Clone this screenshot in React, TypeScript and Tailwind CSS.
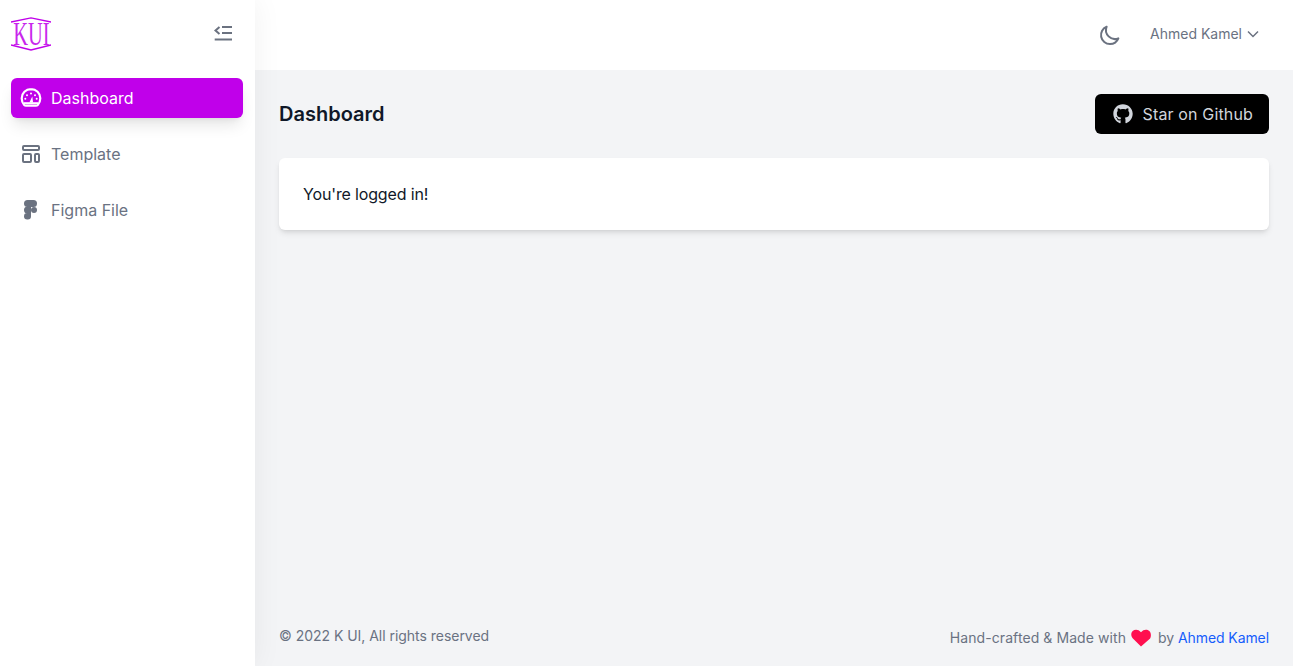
import { FaGithub } from 'react-icons/fa';

function Logo() {
  return (
    <div className="relative w-[40px] h-[34px] ml-[11px] mb-[2px] flex items-center justify-center text-[#c000ea]">
      <svg className="absolute inset-0" width="40" height="34" viewBox="0 0 40 34" fill="none" stroke="currentColor" strokeWidth="1.3" aria-hidden="true">
        <path d="M0 5 L20 0.8 L40 5" />
        <path d="M0 28 L20 33 L40 28" />
      </svg>
      <span className="font-['Liberation_Serif',serif] text-[33px] leading-none whitespace-nowrap scale-x-[0.62] shrink-0 opacity-85">KUI</span>
    </div>
  );
}

function FoldIcon() {
  return (
    <svg className="mb-1" width="24" height="24" viewBox="0 0 24 24" fill="none" stroke="#6b7280" strokeWidth="2" aria-hidden="true">
      <path d="M11 6h10M11 12h10M3.700 18.500H21" />
      <path d="M8.500 6 4.500 9.500 8.500 13" strokeWidth="2" />
    </svg>
  );
}

function GaugeIcon() {
  return (
    <svg width="24" height="24" viewBox="0 0 24 24" fill="none" aria-hidden="true">
      <path d="M12 3.200c-5.200 0-9.300 4-9.300 9.100 0 2.600.9 5 2.500 6.700.5.500 1.100.700 1.800.700h10c.7 0 1.300-.2 1.800-.7 1.600-1.700 2.500-4.100 2.500-6.700 0-5.100-4.100-9.100-9.300-9.100z" stroke="#fff" strokeWidth="2.200" />
      <circle cx="12" cy="7.400" r="1" fill="#fff" />
      <circle cx="8" cy="9.200" r="1" fill="#fff" />
      <circle cx="16" cy="9.200" r="1" fill="#fff" />
      <circle cx="6.300" cy="12.800" r="1" fill="#fff" />
      <circle cx="17.700" cy="12.800" r="1" fill="#fff" />
      <path d="M10.400 16.500 13.300 10.500l.8 6z" fill="#fff" />
      <path d="M5 17.200h14" stroke="#fff" strokeWidth="2" />
    </svg>
  );
}

function TemplateIcon() {
  return (
    <svg width="24" height="24" viewBox="0 0 24 24" fill="none" stroke="#6b7280" strokeWidth="2" strokeLinecap="round" strokeLinejoin="round" aria-hidden="true">
      <path d="M4 5a1 1 0 011-1h14a1 1 0 011 1v2a1 1 0 01-1 1H5a1 1 0 01-1-1V5zM4 13a1 1 0 011-1h6a1 1 0 011 1v6a1 1 0 01-1 1H5a1 1 0 01-1-1v-6zM16 13a1 1 0 011-1h2a1 1 0 011 1v6a1 1 0 01-1 1h-2a1 1 0 01-1-1v-6z" />
    </svg>
  );
}

function FigmaIcon() {
  return (
    <svg width="24" height="24" viewBox="0 0 24 24" fill="#6b7280" aria-hidden="true">
      <rect x="5" y="2" width="13" height="7" rx="3.500" />
      <rect x="5" y="8.500" width="7" height="7" rx="3.500" />
      <path d="M8.500 8.500H12v7H8.500z" />
      <circle cx="15" cy="12" r="3" />
      <rect x="5" y="15" width="7" height="6.500" rx="3.250" />
      <path d="M8.500 15H12v3H8.500z" />
    </svg>
  );
}

function MoonIcon() {
  return (
    <svg width="24" height="24" viewBox="0 0 24 24" fill="none" stroke="#6b7280" strokeWidth="2" strokeLinecap="round" strokeLinejoin="round" aria-hidden="true">
      <path d="M20.354 15.354A9 9 0 018.646 3.646 9.003 9.003 0 0012 21a9.003 9.003 0 008.354-5.646z" />
    </svg>
  );
}

function Chevron() {
  return (
    <svg width="20" height="20" viewBox="0 0 20 20" fill="none" stroke="#6b7280" strokeWidth="1.500" aria-hidden="true">
      <path d="M5 7.500 10 12.500l5-5" />
    </svg>
  );
}

function Heart() {
  return (
    <svg className="ml-[5px] mr-[7px]" width="20" height="20" viewBox="0 0 20 20" fill="#ff0f4f" aria-hidden="true">
      <path d="M10 18.500 1.900 10.400C-.4 8-.1 4.700 1.700 3c2.200-2 5.800-1.800 8.300 1.200C12.500 1.200 16.100 1 18.300 3c1.800 1.700 2.100 5 .800 7.400z" />
    </svg>
  );
}

export default function App() {
  return (
    <div className="flex h-[666px] overflow-hidden bg-[#f3f4f6] font-['Inter',sans-serif] text-base">
      {/* Sidebar */}
      <aside className="w-[255px] shrink-0 bg-white shadow-[0_0_28px_rgba(0,0,0,0.06)] z-10 flex flex-col">
        <div className="h-[70px] flex items-center justify-between pr-[20px]">
          <Logo />
          <FoldIcon />
        </div>
        <nav className="flex flex-col gap-4 w-[232px] ml-[11px] mt-2">
          <a className="flex items-center gap-2 p-2 h-10 rounded-md bg-[#c000ea] text-white shadow-lg">
            <GaugeIcon />
            <span>Dashboard</span>
          </a>
          <a className="flex items-center gap-2 p-2 h-10 rounded-md text-gray-500">
            <TemplateIcon />
            <span>Template</span>
          </a>
          <a className="flex items-center gap-2 p-2 h-10 rounded-md text-gray-500">
            <FigmaIcon />
            <span>Figma File</span>
          </a>
        </nav>
      </aside>

      <div className="flex-1 flex flex-col min-w-0">
        {/* Navbar */}
        <header className="h-[70px] bg-white flex items-center justify-end pr-[30px]">
          <MoonIcon />
          <div className="flex items-center gap-[1px] ml-[28px] mb-[2px] text-sm text-gray-500">
            <span>Ahmed Kamel</span>
            <Chevron />
          </div>
        </header>

        <main className="flex-1 flex flex-col p-6">
          <div className="flex items-center justify-between">
            <h2 className="text-xl font-semibold leading-7 text-gray-900">Dashboard</h2>
            <a className="flex items-center justify-between w-[174px] h-10 pl-[18px] pr-4 rounded-md bg-black text-gray-300">
              <FaGithub size={20} className="text-gray-300" />
              <span className="tracking-[0.15px]">Star on Github</span>
            </a>
          </div>
          <div className="mt-6 p-6 rounded-md bg-white shadow-md text-gray-900 tracking-[-0.15px]">You're logged in!</div>
        </main>

        <footer className="flex items-start justify-between px-6 h-[58px] text-sm text-gray-500">
          <span className="pt-[18px] tracking-[-0.03px]">© 2022 K UI, All rights reserved</span>
          <div className="flex items-center h-5 mt-[20px]">
            <span className="tracking-[0.08px]">Hand-crafted &amp; Made with</span>
            <Heart />
            <span className="tracking-[-0.08px]">by <a className="text-blue-600">Ahmed Kamel</a></span>
          </div>
        </footer>
      </div>
    </div>
  );
}
